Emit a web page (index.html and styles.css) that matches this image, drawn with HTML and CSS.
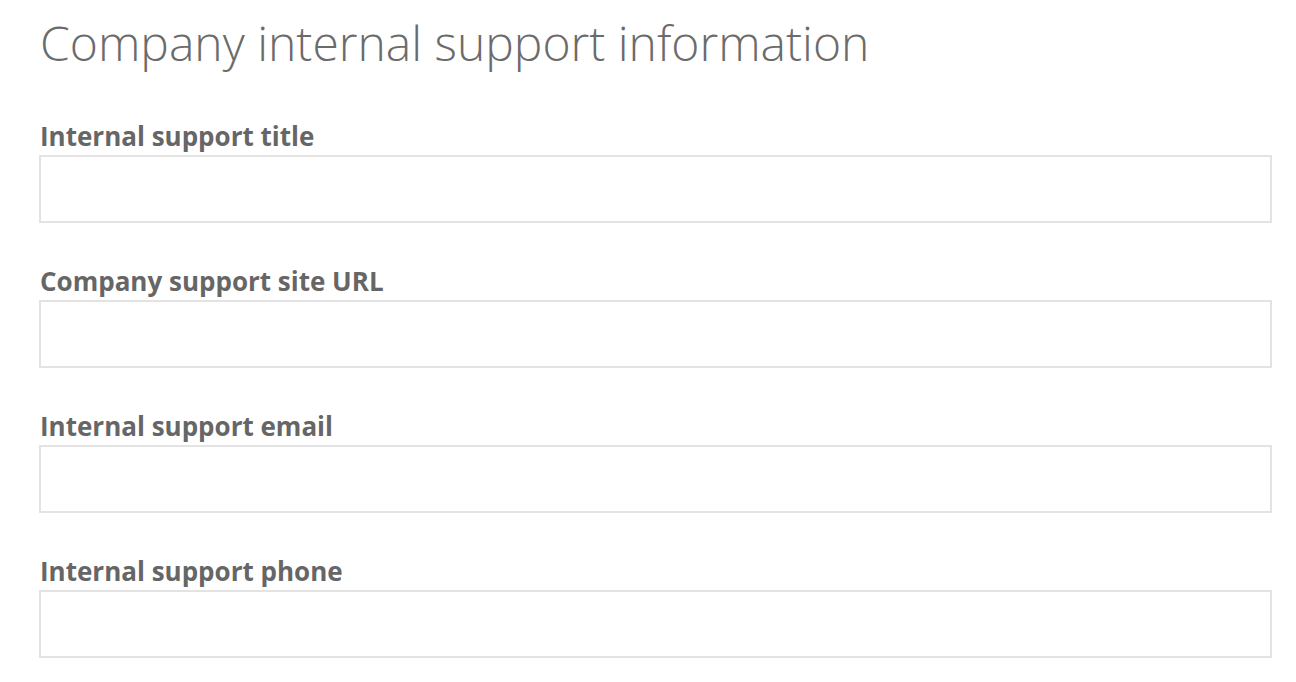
FILE: index.html
```html
<!DOCTYPE html>
<html lang="en">
<head>
<meta charset="utf-8">
<title>Company internal support information</title>
<link rel="stylesheet" href="styles.css">
</head>
<body>
<main class="page">
  <h1 class="title">Company internal support information</h1>
  <form class="form">
    <div class="field">
      <label class="label" for="f1">Internal support title</label>
      <input class="input" id="f1" type="text">
    </div>
    <div class="field">
      <label class="label" for="f2">Company support site URL</label>
      <input class="input" id="f2" type="text">
    </div>
    <div class="field">
      <label class="label" for="f3">Internal support email</label>
      <input class="input" id="f3" type="text">
    </div>
    <div class="field">
      <label class="label" for="f4">Internal support phone</label>
      <input class="input" id="f4" type="text">
    </div>
  </form>
</main>
</body>
</html>
```
FILE: styles.css
```css
html, body {
  margin: 0;
  padding: 0;
  background: #fff;
}
.page {
  padding: 13px 24px 0 39px;
  font-family: "Open Sans", "Liberation Sans", sans-serif;
  color: #666;
}
.title {
  margin: 0 0 0 1px;
  font-weight: 300;
  font-size: 48px;
  line-height: 60px;
  color: #6b6b6b;
}
.form {
  display: flex;
  flex-direction: column;
  gap: 39px;
  margin-top: 44px;
}
.field {
  display: flex;
  flex-direction: column;
}
.label {
  margin-left: 1px;
  font-weight: 700;
  font-size: 26px;
  line-height: 38px;
  color: #666;
}
.input {
  box-sizing: border-box;
  width: 100%;
  height: 68px;
  margin: 0;
  border: 2px solid #e3e3e3;
  border-radius: 0;
  background: #fff;
  outline: none;
}
```
